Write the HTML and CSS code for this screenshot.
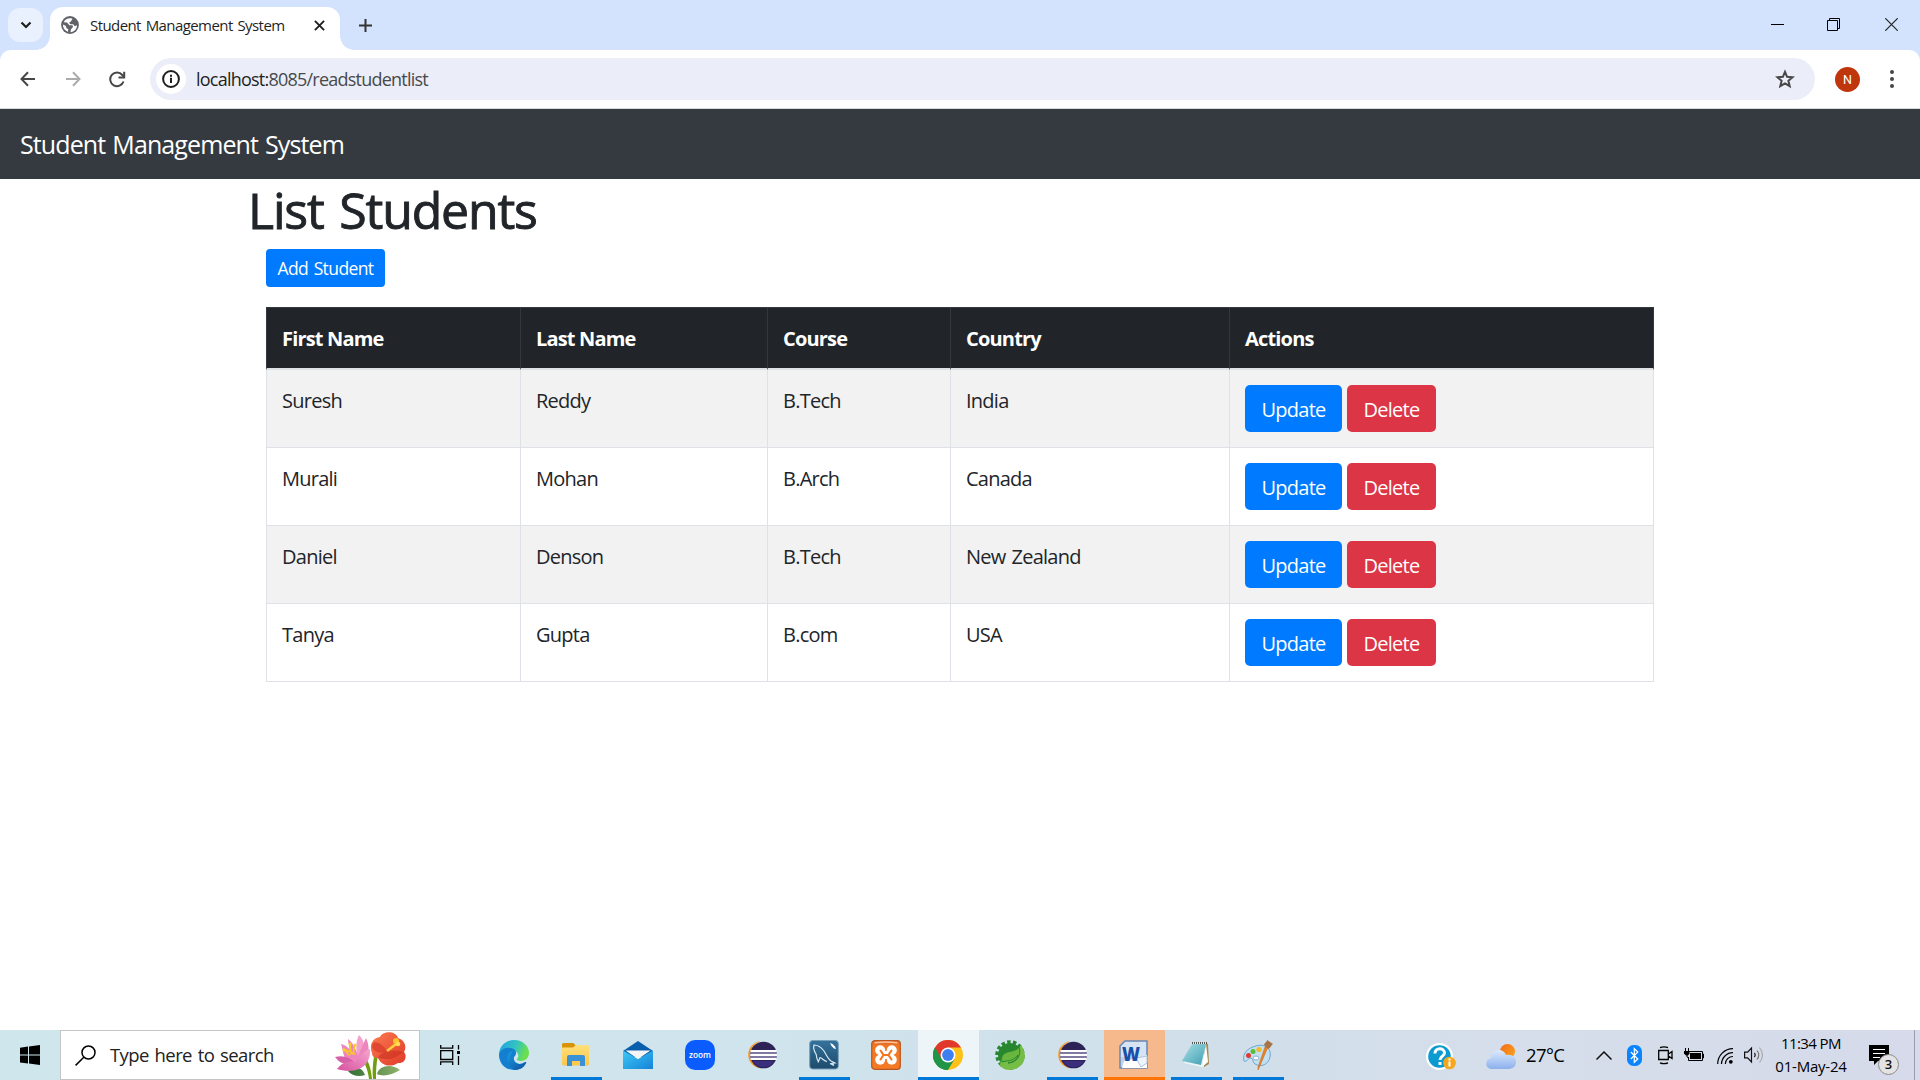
FILE: index.html
```html
<!DOCTYPE html>
<html lang="en">
<head>
<meta charset="utf-8">
<title>Student Management System</title>
<link rel="stylesheet" href="styles.css">
</head>
<body>
<header class="browser">
  <div class="tabstrip">
    <button class="tab-search"><svg width="12" height="8" viewBox="0 0 12 8"><path d="M1.5 1.5 6 6l4.500-4.500" fill="none" stroke="#1f1f1f" stroke-width="2.200"/></svg></button>
    <div class="tab">
      <svg class="globe" width="18" height="18" viewBox="0 0 18 18"><circle cx="9" cy="9" r="8.900" fill="#5f6368"/><path d="M10 2.200C7 1.800 4 3 2.700 6.200l3.300.3 2.300 2.700 3.200.1.500 1.700-2 2.300-.5 2.900c3.800-.3 6.600-3.500 6.500-7l-2.200 1-1.600-2-2.800.1L8 6.700l1.900-1.300 1.600-2.700z" fill="#fff"/><path d="M2 8.500c-.2 3.200 1.800 6.200 5 7.200l.3-2.500-2-1.300-.3-2z" fill="#fff"/></svg>
      <span class="tab-title">Student Management System</span>
      <svg width="11" height="11" viewBox="0 0 11 11"><path d="m.9.9 9.200 9.200M10.100.9.900 10.100" stroke="#1f1f1f" stroke-width="1.900"/></svg>
    </div>
    <svg class="new-tab" width="13" height="13" viewBox="0 0 13 13"><path d="M6.500 0v13M0 6.500h13" stroke="#333" stroke-width="2"/></svg>
    <div class="window-controls">
      <svg width="13" height="13" viewBox="0 0 13 13"><path d="M0 6.500h13" stroke="#000"/></svg>
      <svg width="13" height="13" viewBox="0 0 13 13"><path d="M.5 2.500h10v10H.5zM2.500 2.500v-2h10v10h-2" fill="none" stroke="#000"/></svg>
      <svg class="close" width="13" height="13" viewBox="0 0 13 13"><path d="m.3.3 12.400 12.400M12.700.3.300 12.700" stroke="#222" stroke-width="1.200"/></svg>
    </div>
  </div>
  <div class="toolbar">
    <svg class="nav-icon" width="16" height="16" viewBox="0 0 16 16"><path d="M15 8H2M8 1.300 1.500 8 8 14.700" fill="none" stroke="#474747" stroke-width="2"/></svg>
    <svg class="nav-icon" width="16" height="16" viewBox="0 0 16 16"><path d="M1 8h13M8 1.300 14.500 8 8 14.700" fill="none" stroke="#ababab" stroke-width="2"/></svg>
    <svg class="nav-icon" width="17" height="17" viewBox="0 0 17 17"><path d="M14.500 10.500A6.800 6.800 0 1 1 13.300 4l2 2" fill="none" stroke="#474747" stroke-width="2"/><path d="M15.200.8v5.700H9.500" fill="none" stroke="#474747" stroke-width="2"/></svg>
    <div class="omnibox">
      <span class="site-info"><svg width="18" height="18" viewBox="0 0 18 18"><circle cx="9" cy="9" r="7.900" fill="none" stroke="#1f1f1f" stroke-width="2"/><path d="M9 7.800v5.200M9 4.700v2" stroke="#1f1f1f" stroke-width="2"/></svg></span>
      <span class="url"><span class="host">localhost:</span>8085/readstudentlist</span>
      <svg class="star" width="20" height="20" viewBox="0 0 20 20"><path d="m10 2.800 2.100 5 5.400.5-4.100 3.500 1.300 5.300-4.700-2.800-4.700 2.800 1.300-5.300-4.100-3.500 5.400-.5z" fill="none" stroke="#474747" stroke-width="2"/></svg>
    </div>
    <span class="avatar">N</span>
    <svg class="menu" width="4" height="18" viewBox="0 0 4 18"><g fill="#474747"><circle cx="2" cy="2" r="2"/><circle cx="2" cy="9" r="2"/><circle cx="2" cy="16" r="2"/></g></svg>
  </div>
</header>

<nav class="navbar">Student Management System</nav>

<main class="container">
  <h1>List Students</h1>
  <div class="content">
    <button class="btn btn-primary btn-sm">Add Student</button>
    <table class="students">
      <colgroup><col class="c-first"><col class="c-last"><col class="c-course"><col class="c-country"><col class="c-actions"></colgroup>
      <thead><tr><th>First Name</th><th>Last Name</th><th>Course</th><th>Country</th><th>Actions</th></tr></thead>
      <tbody>
        <tr><td>Suresh</td><td>Reddy</td><td>B.Tech</td><td>India</td><td><div class="actions"><button class="btn btn-primary">Update</button><button class="btn btn-danger">Delete</button></div></td></tr>
        <tr><td>Murali</td><td>Mohan</td><td>B.Arch</td><td>Canada</td><td><div class="actions"><button class="btn btn-primary">Update</button><button class="btn btn-danger">Delete</button></div></td></tr>
        <tr><td>Daniel</td><td>Denson</td><td>B.Tech</td><td>New Zealand</td><td><div class="actions"><button class="btn btn-primary">Update</button><button class="btn btn-danger">Delete</button></div></td></tr>
        <tr><td>Tanya</td><td>Gupta</td><td>B.com</td><td>USA</td><td><div class="actions"><button class="btn btn-primary">Update</button><button class="btn btn-danger">Delete</button></div></td></tr>
      </tbody>
    </table>
  </div>
</main>

<footer class="taskbar">
  <svg width="0" height="0" class="defs">
    <defs>
      <linearGradient id="edgeA" x1="0" y1="0" x2="1" y2=".3"><stop offset="0" stop-color="#1ea0e6"/><stop offset=".6" stop-color="#33c4c0"/><stop offset="1" stop-color="#6be04e"/></linearGradient>
      <linearGradient id="edgeB" x1="0" y1="0" x2="1" y2="1"><stop offset="0" stop-color="#1b9de2"/><stop offset="1" stop-color="#0b4fa0"/></linearGradient>
      <linearGradient id="folder" x1="0" y1="0" x2="0" y2="1"><stop offset="0" stop-color="#ffdf7c"/><stop offset="1" stop-color="#fdc748"/></linearGradient>
      <linearGradient id="mail" x1="0" y1="0" x2="1" y2="1"><stop offset="0" stop-color="#3ec9f5"/><stop offset="1" stop-color="#1582d8"/></linearGradient>
      <linearGradient id="mysql" x1="0" y1="0" x2="0" y2="1"><stop offset="0" stop-color="#34729c"/><stop offset="1" stop-color="#1d4b6b"/></linearGradient>
      <linearGradient id="pad" x1="0" y1="0" x2="1" y2="1"><stop offset="0" stop-color="#a9dfe5"/><stop offset="1" stop-color="#3e9fb2"/></linearGradient>
      <linearGradient id="cloud" x1="0" y1="0" x2="0" y2="1"><stop offset="0" stop-color="#dceaff"/><stop offset="1" stop-color="#8cb0ec"/></linearGradient>
      <linearGradient id="sun" x1="0" y1="0" x2="1" y2="1"><stop offset="0" stop-color="#f26a1b"/><stop offset="1" stop-color="#fba81c"/></linearGradient>
      <linearGradient id="pink" x1="0" y1="1" x2="1" y2="0"><stop offset="0" stop-color="#d6529f"/><stop offset="1" stop-color="#f7a6cf"/></linearGradient>
      <linearGradient id="red" x1="0" y1="0" x2="1" y2="1"><stop offset="0" stop-color="#fb7c50"/><stop offset="1" stop-color="#e13a28"/></linearGradient>
      <linearGradient id="leaf" x1="0" y1="0" x2="1" y2="0"><stop offset="0" stop-color="#2f7034"/><stop offset="1" stop-color="#8fb26a"/></linearGradient>
      <linearGradient id="xampp" x1="0" y1="0" x2="0" y2="1"><stop offset="0" stop-color="#d8672b"/><stop offset=".2" stop-color="#f47720"/><stop offset="1" stop-color="#f47a26"/></linearGradient>
      <symbol id="eclipse" viewBox="0 0 30 30"><path d="M13 1.200A13.800 13.800 0 0 0 13 28.500 15 15 0 0 1 13 1.200z" fill="#f7941e"/><path d="M13 1a14 14 0 0 0-5 24 15 15 0 0 1 5-24z" fill="#f9b15a"/><circle cx="16.500" cy="15" r="13.300" fill="#2c2255"/><path d="M6 21h21a12 12 0 0 1-21 0z" fill="#3a2f7c"/><path d="M3.500 11h26.200M3.200 15h26.800M3.500 19h26.200" stroke="#fff" stroke-width="2.200"/><path d="M3.300 13h26.600M3.300 17h26.600" stroke="#9c98bd" stroke-width="1.400"/></symbol>
    </defs>
  </svg>
  <div class="start"><svg width="20" height="20" viewBox="0 0 20 20"><path d="M0 2.700 8 1.500v7.900H0zM9 1.400 20 0v9.400H9zM0 10.400h8v8L0 17.400zM9 10.400h11V20L9 18.500z"/></svg></div>
  <div class="search">
    <svg width="21" height="21" viewBox="0 0 21 21"><circle cx="13.500" cy="7.500" r="6.500" fill="none" stroke="#000" stroke-width="1.500"/><path d="m8.800 12.200-8.200 8.200" stroke="#000" stroke-width="1.500"/></svg>
    <span class="search-text">Type here to search</span>
    <svg class="flowers" width="72" height="47" viewBox="0 0 72 47">
      <path d="M34 47C33 39 31 35 28 27l3-1c4 7 5 12 6 21zM38 47c-1-8 0-15 1-23h4c-2 8-2 16-2 23z" fill="#6f9e10"/>
      <path d="M30 43c-6 2-13 1-17-4 6-5 14-5 17 4zM42 42c2-8 14-11 23-4-8 5-17 7-23 4z" fill="url(#leaf)"/>
      <path d="M24 3c5 5 6 11 5 17 1 8-1 15-6 17-4-5-9-14-9-22 4 2 6 4 8 7-1-7-1-13 2-19z" fill="#f3a0cd"/>
      <path d="M13 7c4 3 8 9 10 17l8-18c3 6 4 15 0 24-4 5-10 4-17 2C8 26 8 18 6 12c5 1 9 5 12 10-3-5-5-10-5-15z" fill="#ec86bd"/>
      <path d="M0 25c8-2 15 0 20 6-6 3-14 2-20-6z" fill="#d661a8"/>
      <path d="M2 37c4-6 12-9 18-7 6-8 11-12 15-13 1 8-3 17-11 20-7 3-16 2-22 0z" fill="url(#pink)"/>
      <path d="m14 23-5-6m7 5-1-10m3 10 2-9m0 9-9-4" stroke="#f7c52d" stroke-width="1.700" stroke-linecap="round"/>
      <circle cx="9" cy="18" r="1.600" fill="#fccd33"/><circle cx="15" cy="12" r="1.600" fill="#fccd33"/><circle cx="20" cy="13" r="1.600" fill="#fccd33"/>
      <path d="M37 21c-3-7 0-15 8-16 2-6 16-7 18 1 7 2 9 9 6 14 4 5 0 12-6 11-6 4-16 4-20-5-4 0-6-2-6-5z" fill="url(#red)"/>
      <path d="M53 20C49 14 42 8 38 11c-3 5 2 12 15 9z" fill="#d93c2c" opacity=".75"/><path d="M43 26c2-7 19-10 26-5-7 1-8 9-26 5z" fill="#c93222" opacity=".6"/><path d="M53 19c3-9 7-14 11-11-1 5-4 9-11 11z" fill="#f35f3d"/>
      <path d="m52 19 9-7" stroke="#ffd23d" stroke-width="2.300"/><circle cx="61" cy="9" r="3" fill="#ffc22a"/><circle cx="63" cy="12" r="2.300" fill="#ffdc54"/>
    </svg>
  </div>
  <div class="taskview"><svg width="20" height="20" viewBox="0 0 20 20"><path d="M.7 0v3.200h12V0M.7 20v-3.200h12V20M.7 5.700h12v8.800H.7zM18.500 0v4.500M18.500 11v9" fill="none" stroke="#000" stroke-width="1.300"/><path d="M17 6h3v3h-3z"/></svg></div>
  <div class="apps">
    <div class="app"><svg width="30" height="30" viewBox="0 0 30 30"><path d="M0 15C0 6 7 0 15 0c9 0 15 6 15 13 0 5-4 8-8 8-3 0-5-1-4-2 3-3 1-8-4-8C8 11 1 13 0 15z" fill="url(#edgeA)"/><path d="M0 15c1-5 6-8 11-7 6 0 8 6 4 9-1 5 4 9 12 6-4 6-9 7-12 7C6 30 0 23 0 15z" fill="#147fd0"/><path d="M8 19c0-5 3-8 6-8-3 4-3 8 0 11 3 2 8 3 12 0 1 0 2 0 1 1-2 5-7 7-11 7-4-1-8-6-8-11z" fill="url(#edgeB)"/></svg></div>
    <div class="app open"><svg width="30" height="30" viewBox="0 0 30 30"><path d="M1 4.500Q1 3 2.500 3h10L15 6v7H1z" fill="#d99308"/><path d="M1 7.500h11L15 5h11.500Q28 5 28 6.500V24q0 1.500-1.500 1.500h-24Q1 25.500 1 24z" fill="url(#folder)"/><path d="M6 26V17q0-2 2-2h14q2 0 2 2v9h-5v-5h-8v5z" fill="#3a91d6"/></svg></div>
    <div class="app"><svg width="30" height="30" viewBox="0 0 30 30"><path d="M0 11 15 1l15 10v6H0z" fill="#0a5eae"/><path d="M0 10.500 15 19l15-8.500V29H0z" fill="url(#mail)"/><path d="M2.500 10.500h25L15 19z" fill="#f5f5f5"/></svg></div>
    <div class="app"><svg width="30" height="30" viewBox="0 0 30 30"><rect width="30" height="30" rx="10" fill="#0b5cff"/><text x="15" y="17.500" class="zoom-word" text-anchor="middle" textLength="22" lengthAdjust="spacingAndGlyphs">zoom</text></svg></div>
    <div class="app"><svg width="30" height="30"><use href="#eclipse"/></svg></div>
    <div class="app open"><svg width="30" height="30" viewBox="0 0 30 30"><rect x=".7" y=".5" width="28.600" height="28.500" rx="3" fill="url(#mysql)" stroke="#789fb8"/><path d="M9 21c-2-3-1-5-2-7-2-3-3-6-2-9 3 0 7 2 10 6 3 5 4 8 7 10l4 2-3 .5 2 2-4-2m-3-2c-3 0-5-4-7-4l-2 5" fill="none" stroke="#d8eaf4" stroke-width="1.200"/><path d="m21 3 2.500 1 2.500 2.500 1 2.500-2-.500-2.500-2.500z" fill="#fff"/></svg></div>
    <div class="app"><svg width="30" height="30" viewBox="0 0 30 30"><rect x=".7" y=".7" width="28.600" height="28.600" rx="3" fill="url(#xampp)" stroke="#ba561c" stroke-width="1.200"/><path d="M3.500 2.700q11.500-1.500 23 0" fill="none" stroke="#ffc49b" stroke-width="1.500"/><g fill="#fff"><circle cx="9.200" cy="10.200" r="5"/><circle cx="20.800" cy="10.200" r="5"/><circle cx="9.200" cy="19.700" r="5"/><circle cx="20.800" cy="19.700" r="5"/><path d="M7 11h16l-1 4 1 4H7l1-4z"/></g><path d="M9.500 10.500 12.500 15l-3 4.500M20.500 10.500l-3 4.500 3 4.500M12.500 15h5" fill="none" stroke="#f47720" stroke-width="2.100" stroke-linecap="round"/></svg></div>
    <div class="app active"><svg width="30" height="30" viewBox="0 0 30 30"><circle cx="15" cy="15" r="15" fill="#fbc116"/><path d="M15 15 2 7.500A15 15 0 0 0 15 30l6.500-11z" fill="#209447"/><path d="M2 7.500A15 15 0 0 1 28 7.500H15L8.500 19z" fill="#e0382c"/><path d="M2 7.500 8.500 19 15 30A15 15 0 0 1 2 7.500z" fill="#209447"/><circle cx="15" cy="15" r="7.500" fill="#fff"/><circle cx="15" cy="15" r="5.900" fill="#3f7ff0"/></svg></div>
    <div class="app"><svg width="30" height="30" viewBox="0 0 30 30"><circle cx="15" cy="15" r="12" fill="#27872f"/><circle cx="15" cy="15" r="13" fill="none" stroke="#27872f" stroke-width="3.500" stroke-dasharray="3.500 2.300"/><path d="M26 5c8 11 3 24-11 25-6 0-10-4-10-4 1-9 2-12 9-14 6-1 9-3 12-7z" fill="#76bd45"/><path d="M7 22c-2-7 3-10 10-11 4-1 6-2 7-4 3 9-3 16-11 16 7-1 10-6 10-8-4 5-8 6-12 6z" fill="#69b63f" stroke="#27872f"/></svg></div>
    <div class="app open"><svg width="30" height="30"><use href="#eclipse"/></svg></div>
    <div class="app attention"><svg class="word" width="30" height="30" viewBox="0 0 30 30"><path d="M6 1h22v27H1V6z" fill="#d5e3f3" stroke="#6888b5" stroke-width="1.500"/><path d="M2 17h25v10H2z" fill="#bdd0e8"/><path d="m5 21 15-3 8-3v13H3z" fill="#fff"/><path d="m17 18 11-2v7l-6 4z" fill="#eef4fb" stroke="#b3c3db"/><text x="3" y="20.500" class="word-mark" textLength="18" lengthAdjust="spacingAndGlyphs">W</text></svg></div>
    <div class="app open"><svg width="30" height="30" viewBox="0 0 30 30"><path d="m23 3 4 1 1 20-5 3z" fill="#a48b57"/><path d="m25 4-4 23 6-5z" fill="#fff"/><path d="M11 3h14l-4 24-18-4z" fill="#edf6f7"/><path d="M11 4h14l-5 21-19-4z" fill="url(#pad)"/><path d="M11 3h15" stroke="#555" stroke-width="2" stroke-dasharray="1 1"/></svg></div>
    <div class="app open"><svg width="30" height="30" viewBox="0 0 30 30"><path d="M13 6c9-3 16 3 14 11-1 7-9 11-15 7-3-2-1-5-4-6-2-1-5 5-7 3C-1 13 5 8 13 6z" fill="#c3e0f3" stroke="#6ba6cf"/><ellipse cx="13" cy="18" rx="3" ry="2" fill="#fff" stroke="#86b4d1"/><circle cx="5.500" cy="15.500" r="2.500" fill="#df3b30"/><circle cx="10" cy="11.500" r="2.500" fill="#5bbc3b"/><circle cx="16" cy="9.500" r="2.600" fill="#f3b82c"/><path d="m25 7-9 21-1 2v-3l7-20z" fill="#e98426" stroke="#bd651b" stroke-width=".5"/><path d="M21 5c1-3 3-3 3-5l6 4c-2 1-2 4-5 5z" fill="#a87345"/></svg></div>
  </div>
  <div class="tray">
    <svg class="help" width="30" height="30" viewBox="0 0 30 30"><circle cx="13.500" cy="13.500" r="13.500" fill="#fff"/><circle cx="13.500" cy="13.500" r="11.300" fill="#0b9bd0"/><path d="M9 10.500C9 4 18.500 4.500 18.500 10c0 3-4.500 3.500-4.500 7M14 19v3" fill="none" stroke="#fff" stroke-width="3"/><circle cx="23.500" cy="20" r="6.300" fill="#f6a71c"/><path d="M23.500 18.500v5M23.500 15.500v2" stroke="#fff" stroke-width="2"/></svg>
    <svg class="weather" width="30" height="26" viewBox="0 0 30 26"><circle cx="21.500" cy="7.500" r="7.500" fill="url(#sun)"/><path d="M6 25C-1 25-2 16 5 14 5 5 17 3 20 11c6-1 10 2 10 7s-4 7-8 7z" fill="url(#cloud)"/></svg>
    <span class="temperature">27°C</span>
    <svg class="chevron" width="16" height="9" viewBox="0 0 16 9"><path d="m.5 8.500 7.500-7.500 7.500 7.500" fill="none" stroke="#111" stroke-width="1.500"/></svg>
    <svg class="bluetooth" width="15" height="21" viewBox="0 0 15 21"><rect width="15" height="21" rx="6.500" fill="#0a84ff"/><path d="m3.800 7 7 7-3.500 3.300V3.700L10.800 7l-7 7" fill="none" stroke="#fff" stroke-width="1.200"/></svg>
    <svg class="camera" width="15" height="19" viewBox="0 0 15 19"><path d="M.7 4.500h9.600v9H.7zM10.500 8l3.500-2.500v7L10.500 10M2 1.700Q6 .1 10 1.700M2 16.800q4 1.700 8 0" fill="none" stroke="#000" stroke-width="1.300"/></svg>
    <svg class="battery" width="20" height="14" viewBox="0 0 20 14"><path d="M5 3.500h13.500v9h-14V9M18.500 6h1v4h-1" fill="none" stroke="#000"/><path d="M6 5h11v6H6z"/><path d="M0 3h5.500v2.500L4 7.500H2L0 5.500z"/><path d="M1.500 0v3M4.500 0v3M3 7v2l2 1" fill="none" stroke="#000"/></svg>
    <svg class="wifi" width="16" height="16" viewBox="0 0 16 16"><g fill="none" stroke="#000" stroke-width="1.200"><path d="M.7 16A15.300 15.300 0 0 1 16 .7M4.500 16A11.500 11.500 0 0 1 16 4.700M8.300 16A7.700 7.700 0 0 1 16 8.500"/></g><circle cx="13.800" cy="13.800" r="1.900"/></svg>
    <svg class="volume" width="20" height="18" viewBox="0 0 20 18"><g fill="none" stroke="#111" stroke-width="1.200"><path d="M.6 6.200h3L7.500 2v14l-3.900-4.200h-3z"/><path d="M10.500 6.800q1.500 2.200 0 4.400"/><path d="M13 4.500q3.500 4.500 0 9" stroke="#777"/><path d="M15.500 1.500q6 7.500 0 15" stroke="#aaa"/></g></svg>
    <div class="clock"><span class="time">11:34 PM</span><span class="date">01-May-24</span></div>
    <div class="notifications">
      <svg width="20" height="20" viewBox="0 0 20 20"><path d="M0 0h20v16H9l-4 4v-4H0z"/><path d="M4 4.500h12M4 8.500h12M4 12.500h7" stroke="#fff" stroke-width="1.200"/></svg>
      <span class="badge">3</span>
    </div>
    <div class="show-desktop"></div>
  </div>
</footer>
</body>
</html>
```

FILE: styles.css
```css
* { box-sizing: border-box; }
body {
  margin: 0;
  height: 1080px;
  display: flex;
  flex-direction: column;
  overflow: hidden;
  background: #fff;
  color: #212529;
  font: 20px/30px "Open Sans", "Noto Sans", sans-serif;
  letter-spacing: -0.75px;
  word-spacing: 1.500px;
  white-space: nowrap;
}
svg { display: block; flex: none; }
button { border: 0; margin: 0; font: inherit; letter-spacing: inherit; word-spacing: inherit; }

/* Browser frame */
.browser { background: #d3e3fd; border-bottom: 1px solid #d5dbdc; height: 109px; }
.tabstrip { height: 50px; display: flex; align-items: center; padding-left: 8px; }
.tab-search {
  width: 35px; height: 34px; border-radius: 12px; background: #eaf1fe; padding: 0;
  display: flex; align-items: center; justify-content: center;
}
.tab {
  position: relative; align-self: flex-end; width: 290px; height: 43px; margin-left: 7px;
  padding: 0 15px 7px 11px; background: #fff; border-radius: 13px 13px 0 0;
  display: flex; align-items: center;
}
.tab::before, .tab::after {
  content: ""; position: absolute; bottom: 0; width: 14px; height: 14px;
}
.tab::before { left: -14px; background: radial-gradient(circle at 0 0, transparent 13.500px, #fff 14px); }
.tab::after { right: -14px; background: radial-gradient(circle at 100% 0, transparent 13.500px, #fff 14px); }
.tab-title { margin: 0 auto 1px 11px; font-size: 15px; letter-spacing: -0.58px; color: #1f1f1f; }
.new-tab { margin-left: 19px; }
.window-controls { display: flex; gap: 43px; margin: 0 22px 1px auto; }
.close { margin-left: 2px; }
.toolbar {
  height: 58px; background: #fff; border-radius: 11px 11px 0 0;
  display: flex; align-items: center; padding: 0 26px 0 20px;
}
.nav-icon { margin-right: 29px; }
.toolbar .nav-icon:nth-child(3) { margin: 0 24px 0 -1px; }
.omnibox {
  flex: 1; height: 42px; border-radius: 21px; background: #ebeef8;
  display: flex; align-items: center; padding: 0 20px 0 6px;
}
.site-info {
  width: 30px; height: 30px; border-radius: 50%; background: #fff;
  display: flex; align-items: center; justify-content: center;
}
.url { margin: 0 auto 0 10px; font-size: 18px; letter-spacing: -0.77px; color: #47494d; }
.host { color: #1f1f1f; }
.avatar {
  width: 25px; height: 25px; margin-left: 20px; border-radius: 50%; background: #bf360c; color: #fff;
  font: 12.500px/25px Roboto, sans-serif; letter-spacing: 0; text-align: center;
}
.menu { margin-left: 30px; }

/* Application page */
.navbar {
  height: 70px; background: #343a40; color: #fff; padding: 0 20px;
  font-size: 25px; line-height: 70px; letter-spacing: -0.9px;
}
.container { width: 1424px; margin: 0 auto; flex: 1; }
h1 {
  margin: 0; padding-top: 1px; height: 70px; font-size: 50px; line-height: 60px; font-weight: 500;
  letter-spacing: -1.200px; word-spacing: 4px; -webkit-text-stroke: 0.9px #212529;
}
.content { padding-left: 18px; }
.btn {
  display: block; height: 47px; padding: 3px 15px 0; border-radius: 5px; color: #fff;
  line-height: 44px; text-align: center;
}
.btn-primary { background: #007bff; }
.btn-danger { background: #dc3545; }
.btn-sm { width: 119px; height: 38px; padding: 1px 0 0; border-radius: 4px; font-size: 17.500px; line-height: 37px; letter-spacing: -0.6px; }
.students { table-layout: fixed; width: 1388px; margin-top: 20px; border-spacing: 0; }
.c-first { width: 254px; }
.c-last { width: 247px; }
.c-course { width: 183px; }
.c-country { width: 279px; }
.c-actions { width: 425px; }
th, td { text-align: left; vertical-align: top; padding: 16px 0 0 15px; }
th {
  height: 63px; color: #fff; background: #212529; font-weight: 700; letter-spacing: -0.82px; word-spacing: 0;
  border-top: 1px solid #32383e; border-left: 1px solid #32383e; border-bottom: 2px solid #dee2e6;
}
td { height: 78px; border-left: 1px solid #dee2e6; border-bottom: 1px solid #dee2e6; }
td:last-child { padding-top: 15px; }
th:last-child { border-right: 1px solid #32383e; }
td:last-child { border-right: 1px solid #dee2e6; }
tbody tr:nth-child(odd) { background: #f2f2f2; }
.actions { display: flex; gap: 5px; }
.actions .btn-primary { width: 97px; }
.actions .btn-danger { width: 89px; }

/* Taskbar */
.taskbar {
  height: 50px; display: flex; align-items: stretch; color: #000;
  background: linear-gradient(90deg, #cfe6ed 0, #cfe4ec 40%, #d0dfea 63%, #d5deea 78%, #d6daea 100%);
}
.defs { position: absolute; }
.start { width: 60px; display: flex; align-items: center; justify-content: center; }
.search { width: 360px; background: #fff; border: 1px solid #c3c5c6; display: flex; align-items: center; padding-left: 14px; }
.search-text { margin: 0 auto 0 14px; font-size: 18.500px; letter-spacing: -0.58px; color: #222; }
.flowers { margin: 1px 12px 0 0; }
.taskview { width: 64px; padding-left: 20px; display: flex; align-items: center; }
.apps { display: flex; gap: 1px; }
.app { width: 61px; padding-right: 1px; display: flex; align-items: center; justify-content: center; }
.open { background: linear-gradient(#0078d7, #0078d7) center bottom / 51px 3px no-repeat; }
.active { background: #edf5f8; border-bottom: 3px solid #0078d7; padding-top: 3px; }
.attention { background: #f5b98b; border-bottom: 3px solid #ff7300; padding-top: 2px; }
.word { overflow: visible; }
.zoom-word { font: 600 9px "Open Sans", sans-serif; letter-spacing: 0; fill: #fff; }
.word-mark { font: 800 20px "Open Sans", sans-serif; letter-spacing: 0; fill: #184fa8; }
.tray { flex: 1; display: flex; align-items: center; padding-left: 137px; }
.help { margin-top: 5px; }
.weather { margin: 4px 0 0 30px; }
.temperature { width: 69px; padding: 0 0 1px 10px; font-size: 18.500px; letter-spacing: -0.6px; }
.chevron { margin-left: 11px; }
.bluetooth { margin-left: 15px; }
.camera { margin-left: 16px; }
.battery { margin-left: 11px; }
.wifi { margin: 2px 0 0 13px; }
.volume { margin-left: 11px; }
.clock { width: 78px; margin-left: 8px; text-align: center; font-size: 15px; line-height: 23px; word-spacing: 0; }
.clock span { display: block; }
.time { letter-spacing: -0.6px; }
.date { letter-spacing: -0.22px; }
.notifications { position: relative; width: 30px; height: 30px; margin: 10px 0 0 19px; }
.badge {
  position: absolute; left: 9px; top: 9px; width: 21px; height: 21px; border-radius: 50%;
  background: #e3e3e3; border: 1px solid #8b8b8b; color: #111; font-size: 13px; line-height: 19px; font-weight: 600; text-align: center; letter-spacing: 0;
}
.show-desktop { width: 6px; height: 50px; margin-left: auto; border-left: 1px solid #98a1ab; }
```
